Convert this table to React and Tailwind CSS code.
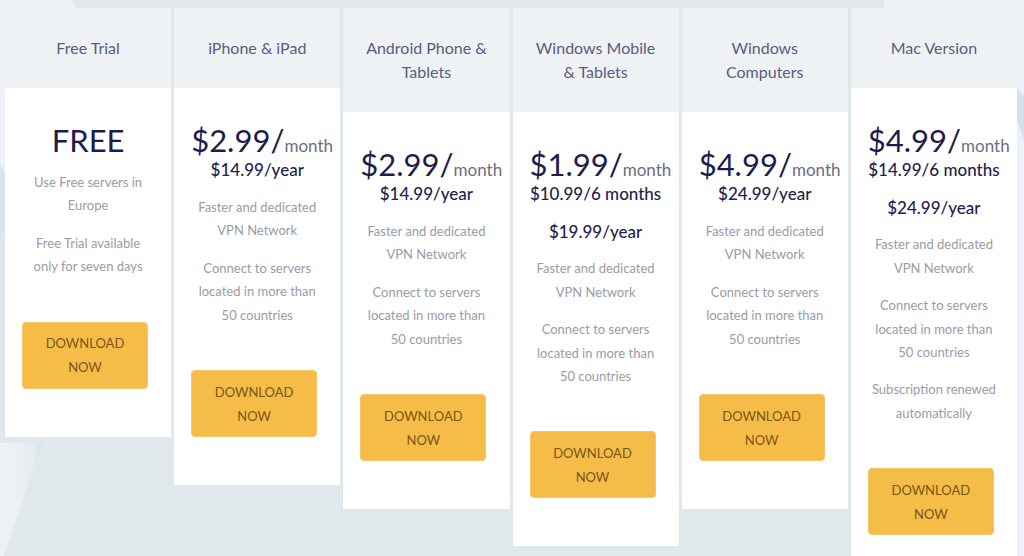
import React from "react";

const plans = [
  {
    title: ["Free Trial"],
    price: "FREE",
    paras: [
      { text: ["Use Free servers in", "Europe"] },
      { text: ["Free Trial available", "only for seven days"] },
    ],
    tight: true,
  },
  {
    title: ["iPhone & iPad"],
    price: "$2.99/",
    sub: "$14.99/year",
    paras: [
      { text: ["Faster and dedicated", "VPN Network"] },
      { text: ["Connect to servers", "located in more than", "50 countries"] },
    ],
  },
  {
    title: ["Android Phone &", "Tablets"],
    price: "$2.99/",
    sub: "$14.99/year",
    paras: [
      { text: ["Faster and dedicated", "VPN Network"] },
      { text: ["Connect to servers", "located in more than", "50 countries"] },
    ],
  },
  {
    title: ["Windows Mobile", "& Tablets"],
    price: "$1.99/",
    sub: "$10.99/6 months",
    paras: [
      { text: ["$19.99/year"], strong: true },
      { text: ["Faster and dedicated", "VPN Network"] },
      { text: ["Connect to servers", "located in more than", "50 countries"] },
    ],
  },
  {
    title: ["Windows", "Computers"],
    price: "$4.99/",
    sub: "$24.99/year",
    paras: [
      { text: ["Faster and dedicated", "VPN Network"] },
      { text: ["Connect to servers", "located in more than", "50 countries"] },
    ],
  },
  {
    title: ["Mac Version"],
    price: "$4.99/",
    sub: "$14.99/6 months",
    paras: [
      { text: ["$24.99/year"], strong: true },
      { text: ["Faster and dedicated", "VPN Network"] },
      { text: ["Connect to servers", "located in more than", "50 countries"] },
      { text: ["Subscription renewed", "automatically"] },
    ],
  },
];

function Backdrop() {
  return (
    <svg className="absolute inset-0 w-full h-full" viewBox="0 0 1024 556" preserveAspectRatio="none">
      <defs>
        <linearGradient id="edge" x1="0" y1="0" x2="1" y2="0">
          <stop offset="0" stopColor="#eef2f5" />
          <stop offset="0.8" stopColor="#e6edf1" />
          <stop offset="1" stopColor="#cfdfe7" />
        </linearGradient>
      </defs>
      <rect width="1024" height="556" fill="#e1e8ec" />
      <polygon points="0,0 72,0 77,10 0,200" fill="#edf1f5" />
      <circle cx="-60" cy="200" r="70" fill="#d6e4eb" />
      <polygon points="0,443 42,443 4,556 0,556" fill="url(#edge)" />
      <polygon points="884,0 1024,0 1024,556 1017,556 1017,8 884,8" fill="#edf1f5" />
      <polygon points="1017,88 1024,96 1024,140 1017,120" fill="#d3e2ea" />
    </svg>
  );
}

function Plan({ plan }) {
  return (
    <div className="flex flex-col">
      <div className="bg-[#eef2f5] px-2 py-[28px] text-center text-[16px] leading-[24px] text-[#5a5c80]">
        {plan.title.map((t) => (
          <div key={t}>{t}</div>
        ))}
      </div>
      <div className="bg-white px-[17px] pt-[32px] pb-[48px] text-center">
        <div className="h-[40px] whitespace-nowrap leading-[40px] text-[#1d1c4d]">
          <span className="text-[31px]">{plan.price}</span>
          {plan.sub && <span className="text-[17px] text-[#6c6d84]">month</span>}
        </div>
        {plan.sub && (
          <div className="whitespace-nowrap text-[17px] leading-[20px] font-medium text-[#23224f]">{plan.sub}</div>
        )}
        {plan.paras.map((p, i) => (
          <p
            key={i}
            className={
              (i === 0 ? (plan.tight ? "mt-[11px] " : "mt-[16px] ") : "mt-[14px] ") +
              (p.strong
                ? "text-[17px] leading-[23.4px] font-medium text-[#23224f]"
                : "text-[13px] leading-[23.4px] text-[#9a9ca6]")
            }
          >
            {p.text.map((l) => (
              <span key={l} className="block">
                {l}
              </span>
            ))}
          </p>
        ))}
        <div className="mt-[43px] flex">
          <button className="w-[126px] h-[67px] rounded-[4px] bg-[#f5bd47] border border-[#f3c565] text-[13px] leading-[24px] text-[#7c5417] uppercase">
            Download
            <br />
            Now
          </button>
        </div>
      </div>
    </div>
  );
}

export default function App() {
  return (
    <div
      className="relative w-[1024px] h-[556px] overflow-hidden"
      style={{ fontFamily: "Lato, 'Open Sans', sans-serif" }}
    >
      <Backdrop />
      <div className="relative grid grid-cols-6 gap-[3px] items-start pl-[5px] pr-[7px] pt-[8px]">
        {plans.map((p, i) => (
          <Plan key={i} plan={p} />
        ))}
      </div>
    </div>
  );
}
